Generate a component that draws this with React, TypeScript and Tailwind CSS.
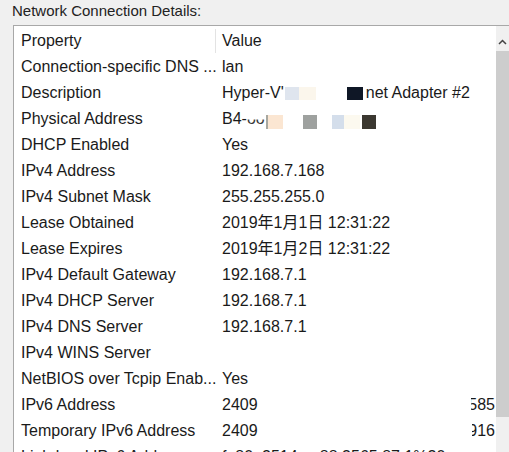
import React from "react";

type Row = { p: string; v: React.ReactNode };

const Blk = ({ c, w = 12, h = 12 }: { c: string; w?: number; h?: number }) => (
  <span className="inline-block shrink-0" style={{ background: c, width: w, height: h }} />
);

const rows: Row[] = [
  { p: "Connection-specific DNS ...", v: "lan" },
  {
    p: "Description",
    v: (
      <span className="flex items-center">
        <span>Hyper-V'</span>
        <span className="flex items-center ml-[1px]">
          <Blk c="#dfe5ee" w={14} h={13} />
          <Blk c="#fbf6ec" w={17} h={13} />
          <Blk c="#ffffff" w={31} h={13} />
          <Blk c="#0f1726" w={16} h={13} />
          <Blk c="#ffffff" w={3} h={13} />
        </span>
        <span>net Adapter #2</span>
      </span>
    ),
  },
  {
    p: "Physical Address",
    v: (
      <span className="flex items-center">
        <span>B4-</span>
        <span className="text-[#3a3a3a]">ᴗᴗ</span>
        <span className="flex items-center mt-[5px] ml-[1px]">
          <Blk c="#a8a8a0" w={2} h={14} />
          <Blk c="#fbe6d2" w={15} h={14} />
          <Blk c="#ffffff" w={20} h={14} />
          <Blk c="#9ea19f" w={14} h={14} />
          <Blk c="#ffffff" w={15} h={14} />
          <Blk c="#d4deeb" w={12} h={14} />
          <Blk c="#fcf9ef" w={16} h={14} />
          <Blk c="#ffffff" w={2} h={14} />
          <Blk c="#3b3831" w={14} h={14} />
        </span>
      </span>
    ),
  },
  { p: "DHCP Enabled", v: "Yes" },
  { p: "IPv4 Address", v: "192.168.7.168" },
  { p: "IPv4 Subnet Mask", v: "255.255.255.0" },
  { p: "Lease Obtained", v: "2019年1月1日 12:31:22" },
  { p: "Lease Expires", v: "2019年1月2日 12:31:22" },
  { p: "IPv4 Default Gateway", v: "192.168.7.1" },
  { p: "IPv4 DHCP Server", v: "192.168.7.1" },
  { p: "IPv4 DNS Server", v: "192.168.7.1" },
  { p: "IPv4 WINS Server", v: "" },
  { p: "NetBIOS over Tcpip Enab...", v: "Yes" },
  {
    p: "IPv6 Address",
    v: (
      <span className="flex w-full">
        <span>2409</span>
        <span className="ml-auto overflow-hidden w-[24px] flex justify-end">
          <span>585</span>
        </span>
      </span>
    ),
  },
  {
    p: "Temporary IPv6 Address",
    v: (
      <span className="flex w-full">
        <span>2409</span>
        <span className="ml-auto overflow-hidden w-[23px] flex justify-end">
          <span>916</span>
        </span>
      </span>
    ),
  },
  { p: "Link-local IPv6 Address", v: "fe80::2514:...:88:3565:87:1%20" },
];

export default function App() {
  return (
    <div
      className="w-[509px] h-[452px] bg-[#f0f0f0] overflow-hidden text-[#1a1a1a]"
      style={{ fontFamily: '"Liberation Sans", "Noto Sans CJK SC", sans-serif' }}
    >
      <div className="pl-[12px] pt-[1px] h-[25px] text-[15px] leading-[20px] text-[#222]">
        Network Connection Details:
      </div>
      <div className="ml-[13px] flex h-[427px] bg-white border-l border-t border-[#a8a8a8]">
        <div className="flex-1 pt-[2px] overflow-hidden text-[16px]">
          <div className="flex h-[26px] items-center">
            <div className="w-[202px] pl-[7px] border-r border-[#e3e3e3] h-[24px] flex items-center">Property</div>
            <div className="pl-[6px]">Value</div>
          </div>
          {rows.map((r, i) => (
            <div key={i} className="flex h-[26px] items-center whitespace-nowrap">
              <div className="w-[203px] pl-[7px]">{r.p}</div>
              <div className="flex-1 pl-[5px] pr-[1px] flex">{r.v}</div>
            </div>
          ))}
        </div>
        <div className="w-[13px] bg-[#f0f0f0] flex flex-col">
          <div className="h-[25px] flex items-end justify-center pb-[6px]">
            <svg width="9" height="6" viewBox="0 0 9 6">
              <path d="M1 5 L4.5 1.5 L8 5" stroke="#444" strokeWidth="1.5" fill="none" />
            </svg>
          </div>
          <div className="h-[366px] bg-[#cdcdcd]" />
        </div>
      </div>
    </div>
  );
}
